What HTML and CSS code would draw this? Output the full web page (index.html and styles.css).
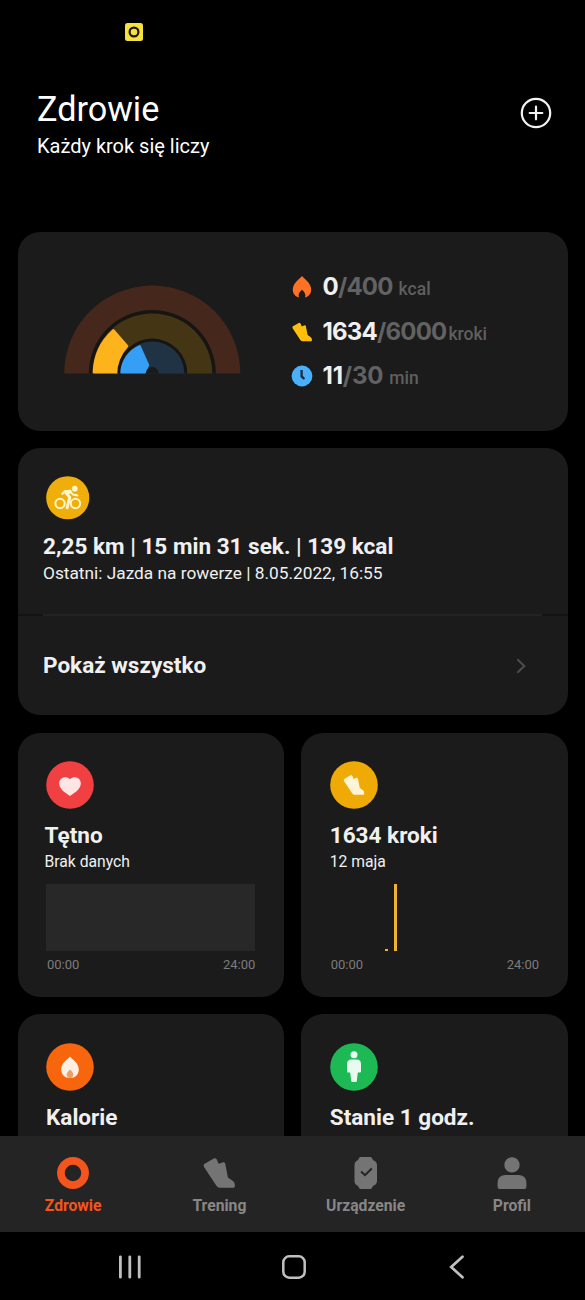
FILE: index.html
```html
<!DOCTYPE html>
<html lang="pl">
<head>
<meta charset="utf-8">
<title>Zdrowie</title>
<link rel="stylesheet" href="styles.css">
</head>
<body>
<svg class="defs" width="0" height="0" aria-hidden="true">
  <symbol id="shoe" viewBox="0 0 32 30"><path d="M.9 6.3Q.3 7.4 1 9L13.6 28Q14.8 29.8 17 29.8H30.6Q31.8 29.6 31.8 28.5V26.4Q31.6 24 29.6 22.8L25.6 20Q24.8 19.3 24.6 18L22.2 5.4Q21.6 4 20 4.2L16.6 5.6Q15.6 5.8 15.2 4.8L13.8 1.6Q12.8-.1 10.8.4Z" fill="currentColor"/></symbol>
</svg>
<div class="screen">
  <div class="status"><svg class="cam" viewBox="0 0 18 18"><rect width="18" height="18" rx="2.5" fill="#f6e13e"/><circle cx="9" cy="9" r="4.4" fill="none" stroke="#1a1803" stroke-width="2.2"/></svg></div>
  <header class="header">
    <div>
      <h1 class="title">Zdrowie</h1>
      <p class="subtitle">Każdy krok się liczy</p>
    </div>
    <svg class="add" viewBox="0 0 32 32" fill="none" stroke="#f4f4f4" stroke-linecap="round"><circle cx="16" cy="16" r="14.2" stroke-width="2.2"/><path d="M9.7 16H22.3M16 9.7V22.3" stroke-width="2.2"/></svg>
  </header>

  <main class="content">
    <section class="card summary">
      <svg class="rings" viewBox="0 0 185 98">
        <path d="M4.3 93.5A88 88 0 0 1 180.3 93.5Z" fill="#45281b"/>
        <path d="M28.8 93.5A63.5 63.5 0 0 1 155.8 93.5Z" fill="#171513"/>
        <path d="M32.3 93.5A60 60 0 0 1 152.3 93.5Z" fill="#443515"/>
        <path d="M34 92.2A58.6 58.6 0 0 1 53.3 50.4L67 66A37 37 0 0 0 57.2 92.2Z" fill="#fdb31b" stroke="#fdb31b" stroke-width="2.6" stroke-linejoin="round"/>
        <path d="M57.3 93.5A35 35 0 0 1 127.3 93.5Z" fill="#171513"/>
        <path d="M60.3 93.5A32 32 0 0 1 124.3 93.5Z" fill="#203345"/>
        <path d="M61.5 92.3A30.8 30.8 0 0 1 79.6 66.3L88 85L84.8 92.3Z" fill="#359ff6" stroke="#359ff6" stroke-width="2.4" stroke-linejoin="round"/>
        <path d="M85.8 93.5A6.5 6.5 0 0 1 98.8 93.5Z" fill="#1a1a1a"/>
      </svg>
      <div class="stats">
        <div class="stat">
          <svg class="stat-icon" viewBox="0 0 22 22"><path d="M11 0C8.5 3 1.8 7.4 1.8 13.4C1.8 17.6 4.4 20.6 8 21.4C6.8 18.6 8.4 16 11 13.8C13.6 16 15.2 18.6 14 21.4C17.6 20.6 20.2 17.6 20.2 13.4C20.2 7.4 13.5 3 11 0Z" fill="#ff7226"/></svg>
          <span class="now">0</span><span class="goal">/400</span><span class="unit spaced">kcal</span>
        </div>
        <div class="stat">
          <svg class="stat-icon yellow"><use href="#shoe"/></svg>
          <span class="now">1634</span><span class="goal">/6000</span><span class="unit">kroki</span>
        </div>
        <div class="stat minutes">
          <svg class="stat-icon" viewBox="0 0 22 22"><circle cx="11" cy="11" r="10.4" fill="#4ab0fa"/><path d="M10.6 5V11.4L13.4 14" fill="none" stroke="#1a2a38" stroke-width="2.3"/></svg>
          <span class="now">11</span><span class="goal">/30</span><span class="unit spaced">min</span>
        </div>
      </div>
    </section>

    <section class="card workout">
      <div class="last">
        <svg class="bike" viewBox="107 109 130 130"><circle cx="172" cy="174" r="64.5" fill="#f0ae0a"/><g fill="none" stroke="#fff5cc" stroke-linecap="round" stroke-linejoin="round"><circle cx="149" cy="191" r="14" stroke-width="6"/><circle cx="195" cy="191" r="14" stroke-width="6"/><path d="M156 162L164 154L179 154" stroke-width="7"/><path d="M165 157L178 173L170 204" stroke-width="9"/><path d="M165 158L177 153L187 164L201 167" stroke-width="6"/></g><path d="M160 154L181 149L184 156L173 167Z" fill="#fff5cc"/><circle cx="193" cy="147" r="8.5" fill="#fff5cc"/></svg>
        <h2 class="heading w1">2,25 km | 15 min 31 sek. | 139 kcal</h2>
        <p class="detail">Ostatni: Jazda na rowerze | 8.05.2022, 16:55</p>
      </div>
      <div class="divider"><i></i></div>
      <div class="all">
        <span class="heading">Pokaż wszystko</span>
        <svg class="chevron" viewBox="0 0 10 16"><path d="M1.3 1.2L8.3 8L1.3 14.8" fill="none" stroke="#4d4d4d" stroke-width="2"/></svg>
      </div>
    </section>

    <div class="grid">
      <section class="card tile">
        <svg class="badge" viewBox="0 0 48 48"><circle cx="24" cy="24" r="23.8" fill="#f14042"/><path d="M24 35C18 31 13.2 27.5 13.2 22.2C13.2 16.6 20 14.2 24 18.2C28 14.2 34.8 16.6 34.8 22.2C34.8 27.5 30 31 24 35Z" fill="#ffe6e5"/></svg>
        <h2 class="heading pull">Tętno</h2>
        <p class="note pull">Brak danych</p>
        <div class="chart empty"></div>
        <div class="axis"><span>00:00</span><span>24:00</span></div>
      </section>
      <section class="card tile">
        <svg class="badge" viewBox="0 0 48 48"><circle cx="24" cy="24" r="23.8" fill="#f0aa05"/><svg class="cream" x="13.3" y="14" width="21.2" height="20"><use href="#shoe"/></svg></svg>
        <h2 class="heading">1634 kroki</h2>
        <p class="note">12 maja</p>
        <div class="chart bars"><i class="bar low"></i><i class="bar high"></i></div>
        <div class="axis"><span>00:00</span><span>24:00</span></div>
      </section>
      <section class="card tile">
        <svg class="badge" viewBox="0 0 48 48"><circle cx="24" cy="24" r="23.8" fill="#f7650d"/><path d="M24 13.5C21.5 16.5 15.2 20 15.2 26.5C15.2 31.5 19 35 24 35C29 35 32.8 31.5 32.8 26.5C32.8 20 26.5 16.5 24 13.5Z" fill="#fff0e4"/><path d="M24 26.5C22.2 28 20.7 29.8 20.7 31.8C20.7 33.8 22 35 24 35C26 35 27.3 33.8 27.3 31.8C27.3 29.8 25.8 28 24 26.5Z" fill="#eba069"/></svg>
        <h2 class="heading">Kalorie</h2>
      </section>
      <section class="card tile">
        <svg class="badge" viewBox="0 0 48 48"><circle cx="24" cy="24" r="23.8" fill="#1db954"/><g fill="#e9fbf0"><circle cx="24" cy="11.8" r="3.5"/><path d="M21.5 16.5H26.5Q31 16.5 31 21V28.5Q31 29.5 30 29.5H27.8L26.8 38.2Q26.6 39 25.8 39H22.2Q21.4 39 21.2 38.2L20.2 29.5H18Q17 29.5 17 28.5V21Q17 16.5 21.5 16.5Z"/></g></svg>
        <h2 class="heading">Stanie 1 godz.</h2>
      </section>
    </div>
  </main>

  <nav class="tabs">
    <a class="tab active"><svg viewBox="0 0 32 32"><circle cx="16" cy="16" r="12.1" fill="none" stroke="currentColor" stroke-width="7.7"/></svg><span>Zdrowie</span></a>
    <a class="tab"><svg><use href="#shoe"/></svg><span>Trening</span></a>
    <a class="tab"><svg viewBox="0 0 32 32"><path d="M10.6 0H20.4Q21.4 0 22 1.2L23.2 3.2Q27 4.6 27 8V24Q27 27.4 23.2 28.8L22 30.8Q21.4 32 20.4 32H10.6Q9.6 32 9 30.8L7.8 28.8Q4.5 27.4 4.5 24V8Q4.5 4.6 7.8 3.2L9 1.2Q9.6 0 10.6 0Z" fill="currentColor"/><path d="M11 14.6L15 18.2L21.8 11.5" fill="none" stroke="#242424" stroke-width="2"/></svg><span>Urządzenie</span></a>
    <a class="tab"><svg viewBox="0 0 32 32" fill="currentColor"><circle cx="16" cy="7.9" r="7.7"/><path d="M9 18H23Q30.4 18.6 30.4 26V30Q30.4 32 28.4 32H3.6Q1.6 32 1.6 30V26Q1.6 18.6 9 18Z"/></svg><span>Profil</span></a>
  </nav>
  <footer class="system">
    <svg viewBox="0 0 24 24"><path d="M2.4 1.8V22.2M11.8 1.8V22.2M21.2 1.8V22.2" stroke="#c0c0c0" stroke-width="2.8" stroke-linecap="round"/></svg>
    <svg viewBox="0 0 24 24"><rect x="1.3" y="1.3" width="21.4" height="21.4" rx="6" fill="none" stroke="#c0c0c0" stroke-width="2.5"/></svg>
    <svg viewBox="0 0 24 24"><path d="M17.5 1.7L6.2 12L17.5 22.3" fill="none" stroke="#c0c0c0" stroke-width="2.7" stroke-linecap="round"/></svg>
  </footer>
</div>
</body>
</html>
```
FILE: styles.css
```css
* { box-sizing: border-box; }
body { margin: 0; background: #000; font-family: Roboto, sans-serif; color: #f0f0f0; }
h1, h2, p { margin: 0; }
svg { display: block; flex: none; }
.defs { display: none; }
.screen { width: 585px; height: 1300px; display: flex; flex-direction: column; overflow: hidden; }

.status { height: 84px; padding: 23px 0 0 125px; flex: none; }
.cam { width: 18px; height: 18px; }
.header { height: 147.5px; flex: none; display: flex; justify-content: space-between; padding: 4px 33.5px 0 37px; }
.title { font-size: 34.2px; line-height: 43px; font-weight: 400; color: #fff; }
.subtitle { font-size: 20px; line-height: 24px; margin-top: 3px; color: #fff; white-space: nowrap; }
.add { width: 32px; height: 32px; margin-top: 9px; }

.content { flex: 1; min-height: 0; overflow: hidden; padding: 0 17.5px; display: flex; flex-direction: column; gap: 17.5px; }
.card { background: #1b1b1b; border-radius: 22px; flex: none; }
.summary { height: 199px; display: flex; padding-left: 42.5px; }
.rings { width: 185px; height: 98px; margin-top: 48.5px; }
.stats { margin: 33.5px 0 0 45.5px; }
.stat { display: flex; align-items: baseline; height: 44.5px; line-height: 44px; white-space: nowrap; letter-spacing: -0.8px; }
.stat-icon { width: 22px; height: 22px; align-self: center; margin-right: 10px; }
.yellow { width: 20px; margin: 0 11px 0 1px; color: #fdbe0c; }
.now, .goal { font-family: Inter, Roboto, sans-serif; font-size: 24px; font-weight: 700; }
.goal { color: #626262; }
.minutes { letter-spacing: -0.2px; }
.unit { font-size: 17.5px; font-weight: 500; color: #5f5f5f; margin-left: 2px; letter-spacing: 0; }
.spaced { margin-left: 6px; }

.workout { height: 267px; }
.last { height: 166px; padding: 28px 25.5px 0; }
.bike { width: 43.5px; height: 43.5px; margin-left: 3px; }
.heading { font-size: 22.55px; line-height: 30px; font-weight: 700; white-space: nowrap; }
.w1 { margin-top: 12px; }
.detail { font-size: 17.3px; line-height: 22px; white-space: nowrap; }
.divider { height: 2px; background: #131313; padding: 0 25.5px; }
.divider i { display: block; height: 2px; background: #232323; }
.all { height: 99px; display: flex; align-items: center; justify-content: space-between; padding: 1px 42px 0 25.5px; }
.chevron { width: 10px; height: 16px; }

.grid { display: grid; grid-template-columns: 1fr 1fr; gap: 17.5px; }
.tile { height: 264px; padding: 28.5px 28.5px 0; }
.badge { width: 48px; height: 48px; }
.cream { color: #fff5d6; }
.tile .heading { margin-top: 12px; }
.note { font-size: 15.7px; line-height: 20px; margin-top: 1px; }
.pull { margin-left: -1.5px; }
.chart { height: 67px; margin-top: 11.5px; }
.empty { background: #282828; }
.bars { display: flex; align-items: flex-end; padding-left: 55.5px; gap: 6px; }
.bar { width: 3px; background: #f1b232; }
.low { height: 2px; }
.high { height: 67px; }
.axis { display: flex; justify-content: space-between; margin: 5px 0 0 1px; font-size: 13px; line-height: 18px; color: #7c7c7c; }

.tabs { height: 95.5px; flex: none; background: #242424; display: flex; }
.tab { flex: 1; display: flex; flex-direction: column; align-items: center; padding-top: 21px; color: #747474; font-size: 15.7px; line-height: 20px; font-weight: 700; }
.tab svg { width: 32px; height: 32px; }
.tab span { margin-top: 7px; color: #878787; }
.active, .tab.active span { color: #f4541d; }
.system { height: 68.5px; flex: none; display: flex; justify-content: space-between; padding: 23px 116px 0 118px; }
.system svg { width: 24px; height: 24px; }
```
